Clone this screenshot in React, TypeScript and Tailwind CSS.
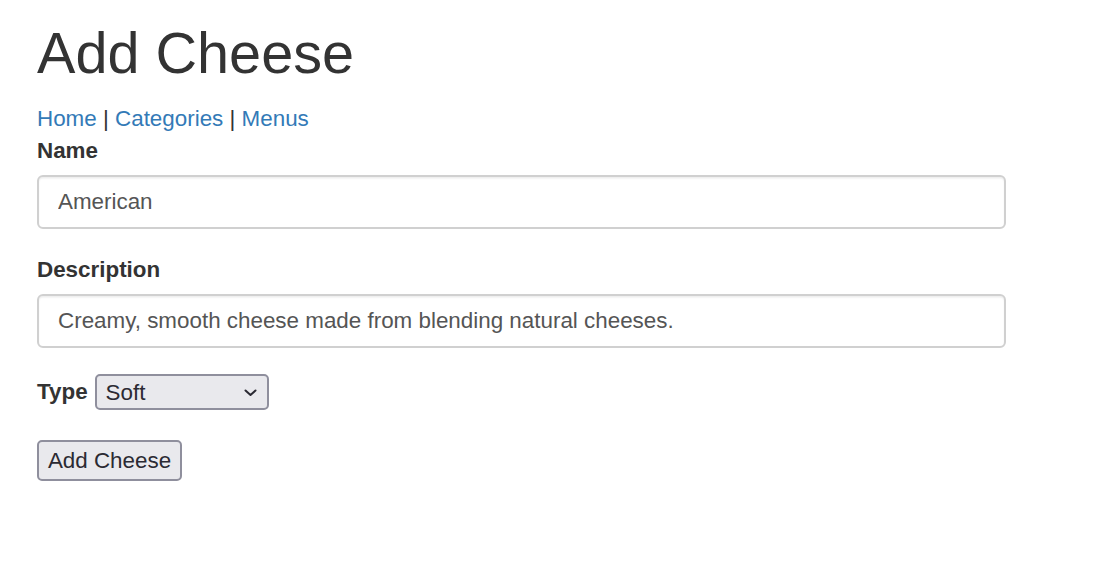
export default function App() {
  const field = "block w-[969px] h-[54px] px-[19px] border-2 border-[#d0d0d0] rounded-[6px] bg-white text-[22.4px] text-[#555] shadow-[inset_0_1.6px_1.6px_rgba(0,0,0,0.075)] outline-none";

  return (
    <div className="min-h-[579px] bg-white pl-[37px] pt-[22px] font-[Liberation_Sans,Arial,sans-serif] text-[#333]">
      <h1 className="m-0 mb-[17px] text-[57.6px] leading-[63px] font-normal">Add Cheese</h1>

      <div className="text-[22.4px] leading-[32px] pt-[1px]">
        <a href="#" className="text-[#337ab7]">Home</a> |{" "}
        <a href="#" className="text-[#337ab7]">Categories</a> |{" "}
        <a href="#" className="text-[#337ab7]">Menus</a>
      </div>

      <form>
        <div className="mb-[25px]">
          <label className="block mb-[8px] text-[22.4px] leading-[32px] font-bold">Name</label>
          <input className={field} defaultValue="American" readOnly />
        </div>

        <div className="mb-[26px]">
          <label className="block mb-[8px] text-[22.4px] leading-[32px] font-bold">Description</label>
          <input
            className={field}
            defaultValue="Creamy, smooth cheese made from blending natural cheeses."
            readOnly
          />
        </div>

        <div className="flex items-center h-[36px]">
          <label className="text-[22.4px] leading-[32px] font-bold">Type</label>
          <div className="relative ml-[7px]">
            <select className="appearance-none block w-[174px] h-[36px] pl-[9px] pb-[2px] border-2 border-[#8f8f9d] rounded-[5px] bg-[#e9e9ed] text-[22.4px] text-[#2b2a33] outline-none">
              <option>Soft</option>
              <option>Hard</option>
              <option>Fake</option>
            </select>
            <svg
              className="absolute right-[12px] top-[15px] pointer-events-none"
              width="13"
              height="8"
              viewBox="0 0 13 8"
              fill="none"
            >
              <path d="M1.5 1.5 L6.5 6 L11.5 1.5" stroke="#2b2a33" strokeWidth="2" strokeLinecap="round" strokeLinejoin="round" />
            </svg>
          </div>
        </div>

        <button
          type="button"
          className="mt-[30px] h-[41px] w-[145px] border-2 border-[#8f8f9d] rounded-[5px] bg-[#e9e9ed] text-[22.4px] text-[#2b2a33]"
        >
          Add Cheese
        </button>
      </form>
    </div>
  );
}
